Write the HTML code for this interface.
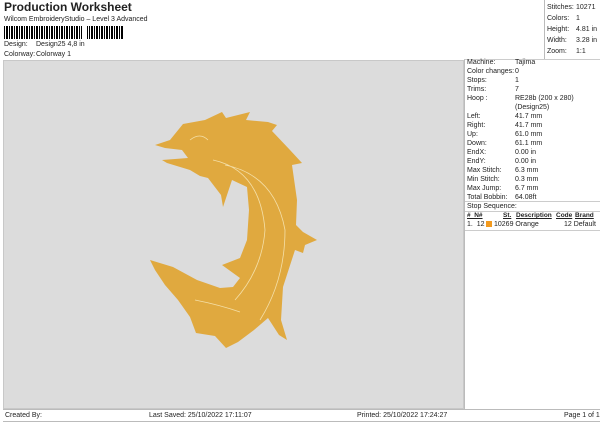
<!DOCTYPE html>
<html><head><style>
*{margin:0;padding:0;box-sizing:border-box}
body{width:600px;height:424px;background:#fff;font-family:"Liberation Sans",sans-serif;color:#222;position:relative;overflow:hidden;font-size:7px}
.a{position:absolute;white-space:nowrap;line-height:9px}
#grey{position:absolute;left:3px;top:60px;width:461px;height:349px;background:#dcdcdc;border:1px solid #c8c8c8}
#rp{position:absolute;left:464px;top:59px;width:136px;height:350px;border-left:1px solid #bbb;border-top:1px solid #ccc}
#tr{position:absolute;left:544px;top:0;width:56px;height:60px;border-left:1px solid #bbb}
#ft{position:absolute;left:3px;top:409px;width:597px;height:13px;border-top:1px solid #bbb;border-bottom:1px solid #bbb}
.h{font-weight:bold;text-decoration:underline;font-size:6.5px}
</style></head><body>
<div class="a" style="left:4px;top:0px;font-size:12px;font-weight:bold;line-height:15px">Production Worksheet</div>
<div class="a" style="left:4px;top:15px">Wilcom EmbroideryStudio – Level 3 Advanced</div>
<div style="position:absolute;left:4px;top:26px;width:119px;height:13px;background:repeating-linear-gradient(90deg,#000 0 1px,#fff 1px 2px,#000 2px 3px,#000 3px 4px,#fff 4px 5px)"></div>
<div style="position:absolute;left:82px;top:26px;width:5px;height:13px;background:#fff"></div>
<div class="a" style="left:4px;top:40px">Design:</div><div class="a" style="left:36px;top:40px">Design25 4,8 in</div>
<div class="a" style="left:4px;top:50px">Colorway:</div><div class="a" style="left:36px;top:50px">Colorway 1</div>
<div id="tr"></div>
<div class="a" style="left:547px;top:2px;line-height:11px">Stitches:<br>Colors:<br>Height:<br>Width:<br>Zoom:</div>
<div class="a" style="left:576px;top:2px;line-height:11px">10271<br>1<br>4.81 in<br>3.28 in<br>1:1</div>
<div id="grey">
<svg width="461" height="349" style="position:absolute;left:-1px;top:-1px" viewBox="3 60 461 349">
<path fill="#e0a93f" d="M155,145 L170,140 L183,124 L205,120 L222,112 L226,118 L250,112 L246,120 L268,122 L277,125 L272,131 L290,150 L302,163 L292,165 L297,200 L296,225 L303,232 L317,240 L305,245 L303,253 L295,250 L283,287 L281,320 L287,340 L279,335 L268,318 L254,330 L238,342 L226,348 L215,336 L196,333 L190,317 L178,300 L165,285 L155,270 L150,260 L173,267 L197,280 L220,288 L233,287 L240,278 L222,265 L240,258 L247,240 L249,210 L247,187 L232,180 L223,207 L221,195 L208,178 L200,176 L190,170 L167,163 L162,160 L188,158 L182,150 L165,148 Z"/>
<path fill="none" stroke="#f4dfa8" stroke-width="0.8" d="M213,160 Q260,170 265,230 Q262,270 235,300 M225,165 Q275,175 285,230 Q285,280 260,320 M195,300 Q220,305 240,312 M190,140 Q200,132 208,140"/>
</svg>
</div>
<div id="rp"></div>
<div class="a" style="left:467px;top:58px">Machine:<br>Color changes:<br>Stops:<br>Trims:<br>Hoop :<br>&nbsp;<br>Left:<br>Right:<br>Up:<br>Down:<br>EndX:<br>EndY:<br>Max Stitch:<br>Min Stitch:<br>Max Jump:<br>Total Bobbin:</div>
<div class="a" style="left:515px;top:58px">Tajima<br>0<br>1<br>7<br>RE28b (200 x 280)<br>(Design25)<br>41.7 mm<br>41.7 mm<br>61.0 mm<br>61.1 mm<br>0.00 in<br>0.00 in<br>6.3 mm<br>0.3 mm<br>6.7 mm<br>64.08ft</div>
<div style="position:absolute;left:465px;top:201px;width:135px;border-top:1px solid #ccc"></div>
<div class="a" style="left:467px;top:202px">Stop Sequence:</div>
<div style="position:absolute;left:465px;top:211px;width:135px;border-top:1px solid #ccc"></div>
<div class="a h" style="left:467px;top:211px">#&nbsp; N#</div>
<div class="a h" style="left:503px;top:211px">St.</div>
<div class="a h" style="left:516px;top:211px">Description</div>
<div class="a h" style="left:556px;top:211px">Code</div>
<div class="a h" style="left:575px;top:211px">Brand</div>
<div class="a" style="left:467px;top:220px">1.&nbsp; 12</div>
<div style="position:absolute;left:486px;top:221px;width:6px;height:6px;background:#f39a1e"></div>
<div class="a" style="left:494px;top:220px">10269 Orange</div>
<div class="a" style="left:564px;top:220px">12 Default</div>
<div style="position:absolute;left:465px;top:230px;width:135px;border-top:1px solid #ccc"></div>
<div id="ft"></div>
<div class="a" style="left:5px;top:411px">Created By:</div>
<div class="a" style="left:149px;top:411px">Last Saved: 25/10/2022 17:11:07</div>
<div class="a" style="left:357px;top:411px">Printed: 25/10/2022 17:24:27</div>
<div class="a" style="left:564px;top:411px">Page 1 of 1</div>
</body></html>
